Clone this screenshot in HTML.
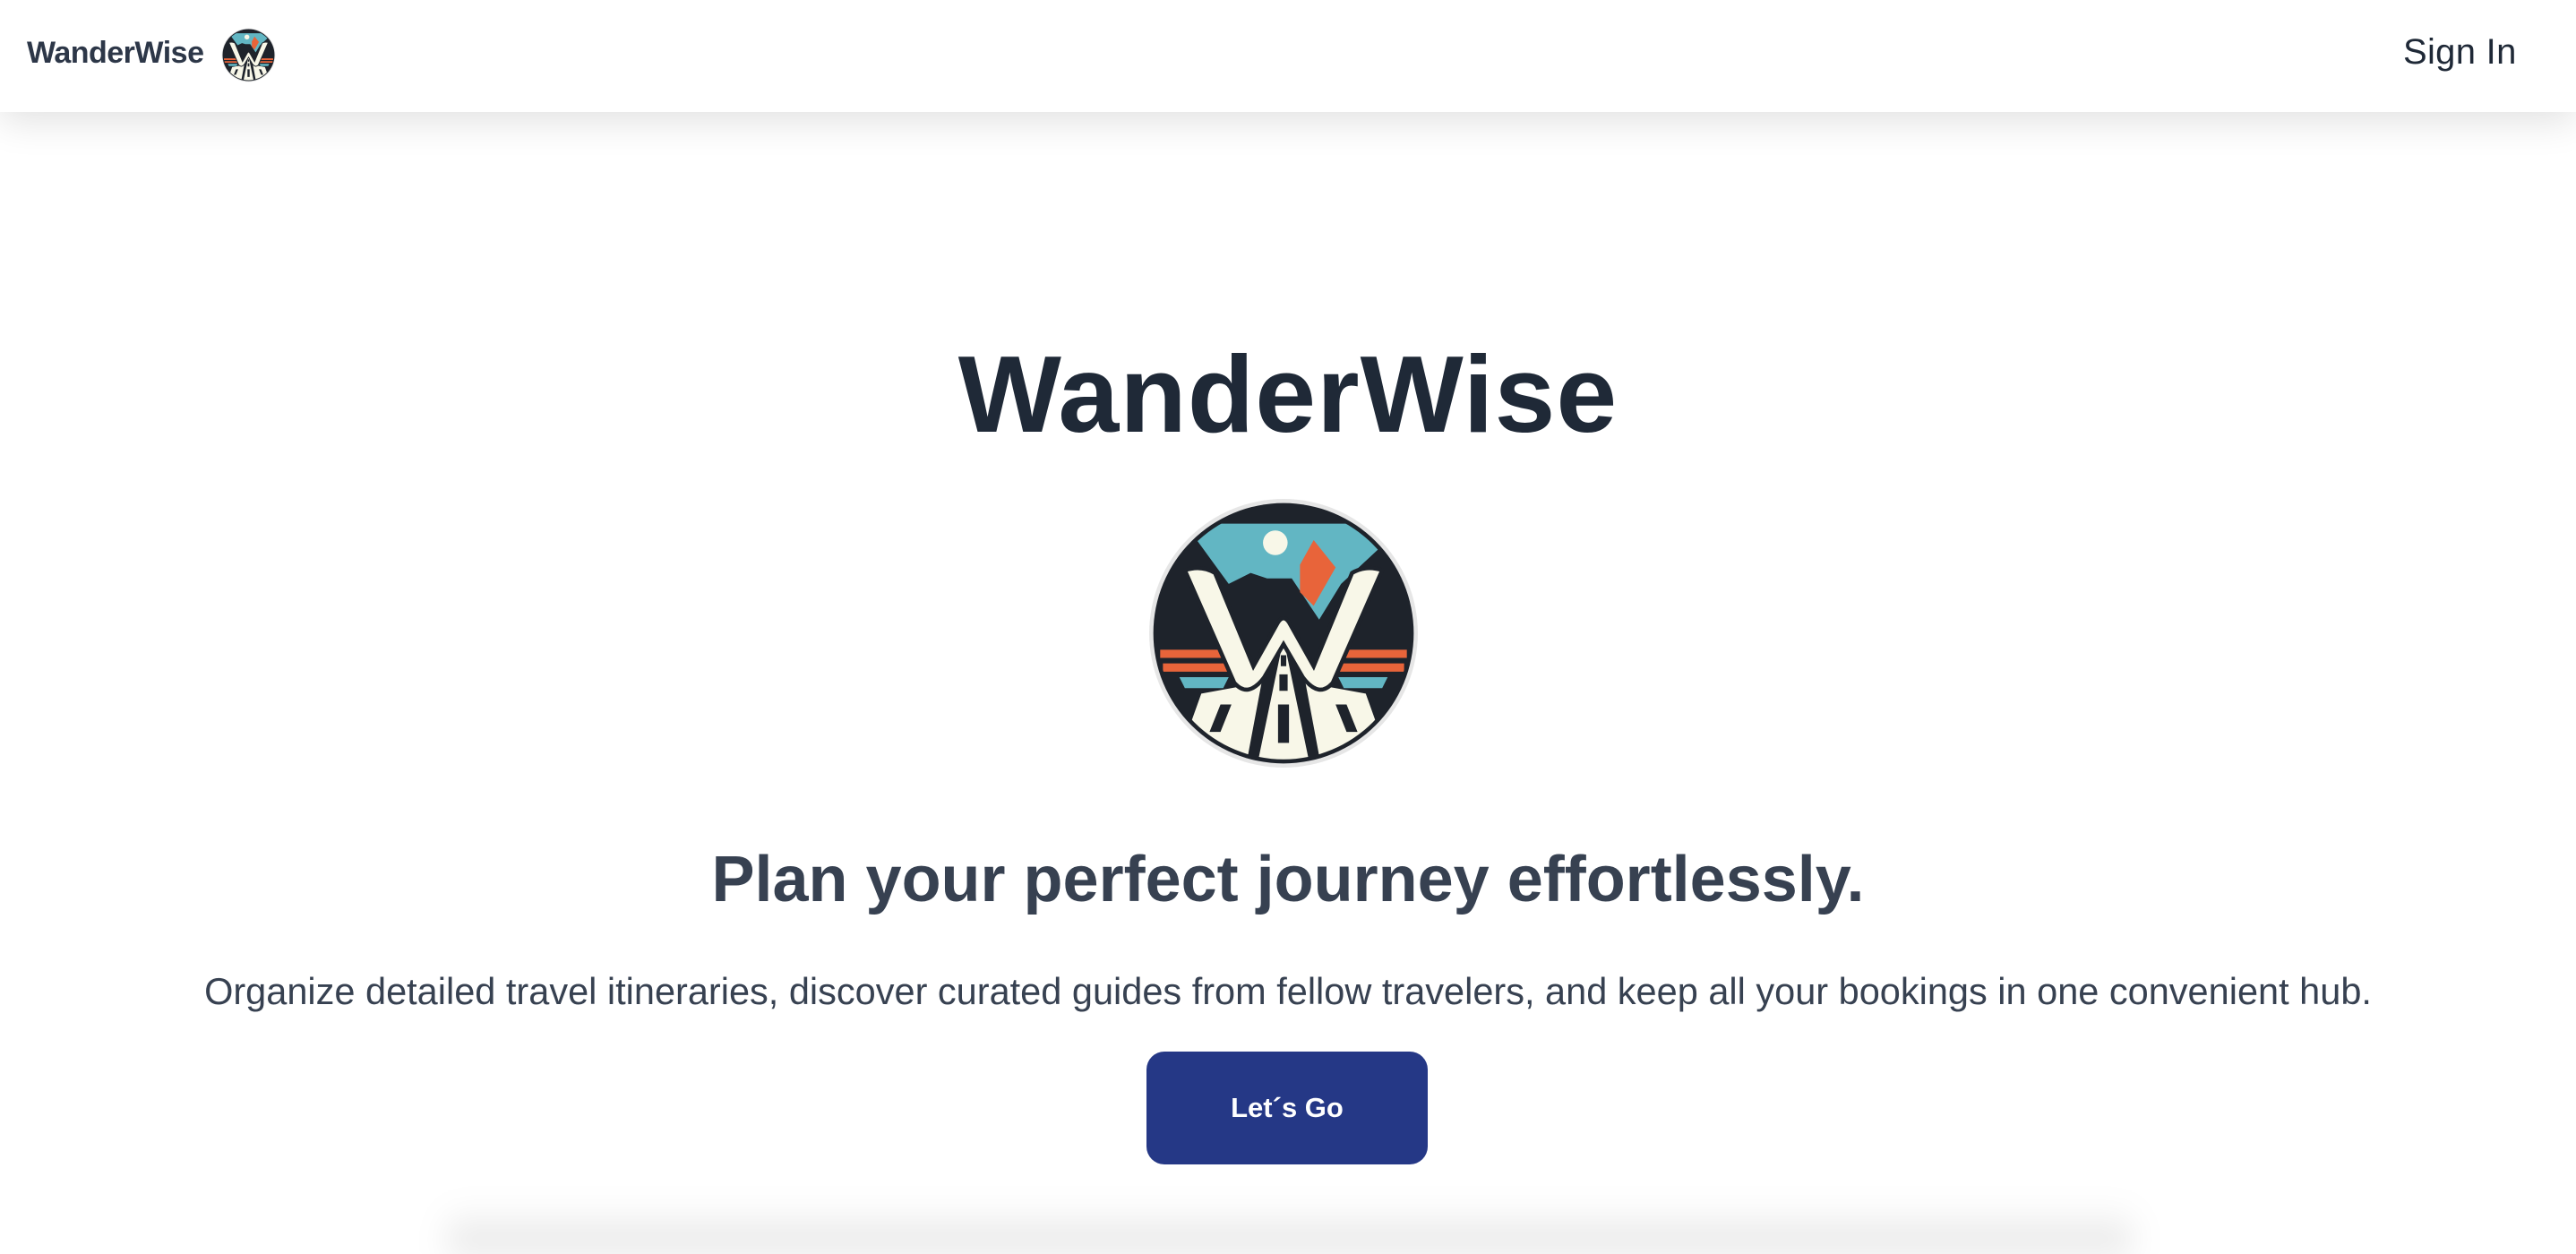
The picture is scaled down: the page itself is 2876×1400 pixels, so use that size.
<!DOCTYPE html>
<html><head><meta charset="utf-8"><style>
html,body{margin:0;padding:0;width:2876px;height:1400px;overflow:hidden;background:#fff;font-family:"Liberation Sans",sans-serif;}
.wrap{position:relative;width:2876px;height:1400px;overflow:hidden}
.hdr{position:absolute;left:0;top:0;width:2876px;height:125px;background:#fff;box-shadow:0 10px 40px rgba(0,0,0,0.12);z-index:2}
.brand{position:absolute;left:30px;top:40px;font-size:34px;font-weight:bold;color:#2d3748;letter-spacing:-0.5px}
.slogo{position:absolute;left:247px;top:31px;width:61px;height:61px}
.sign{position:absolute;left:2683px;top:36px;font-size:40px;color:#1f2937;letter-spacing:0.3px}
.title{position:absolute;left:0;width:2876px;top:370px;text-align:center;font-size:122px;font-weight:bold;color:#1f2937;letter-spacing:1px;line-height:140px}
.blogo{position:absolute;left:1278px;top:554px;width:310px;height:306px}
.sub{position:absolute;left:0;width:2876px;top:940px;text-align:center;font-size:72px;font-weight:bold;color:#374151;line-height:84px}
.para{position:absolute;left:0;width:2876px;top:1083px;text-align:center;font-size:41.5px;color:#374151;line-height:48px}
.btn{position:absolute;left:1280px;top:1174px;width:314px;height:126px;background:#253886;border-radius:20px;color:#fff;font-weight:bold;font-size:31px;text-align:center;line-height:126px}
.shade{position:absolute;left:500px;top:1345px;width:1880px;height:55px;background:linear-gradient(to bottom,rgba(0,0,0,0),rgba(0,0,0,0.12));filter:blur(18px)}
</style></head><body><div class="wrap">
<div class="hdr">
<div class="brand">WanderWise</div>
<svg class="slogo" viewBox="0 0 100 100"><use href="#lg"/></svg>
<div class="sign">Sign In</div>
</div>
<svg width="0" height="0" style="position:absolute"><defs>
<g id="lg">
<circle cx="50" cy="50" r="49" fill="#e6e6e6"/>
<circle cx="50" cy="50" r="47.5" fill="#1e232b"/>
<clipPath id="cc"><circle cx="50" cy="50" r="46"/></clipPath>
<g clip-path="url(#cc)">
<path d="M14 10 L86 10 L86 18 L71 32 L63 45 L53 30 L44 30 L38 28 L30 32 Z" fill="#62b6c3"/>
<path d="M56 25 L61 16 L69 26 L61 40 L56 35 Z" fill="#e8643a"/>
<circle cx="47" cy="17" r="4.5" fill="#f8f7e8"/>
<path d="M5 56 L26 56 L28 59 L5 59 Z M6 61 L29 61 L30 64 L6 64 Z M95 56 L73 56 L71 59 L95 59 Z M94 61 L70 61 L69 64 L94 64 Z" fill="#e8643a"/>
<path d="M12 66 L30 66 L28 70 L14 70 Z M88 66 L70 66 L72 70 L86 70 Z" fill="#62b6c3"/>
<path d="M50 52 L40 100 L60 100 Z M20 72 L42 68 L36 100 L10 100 Z M80 72 L58 68 L64 100 L90 100 Z" fill="#f8f7e8"/>
<path d="M49 58 h2 v4 h-2 Z M48.5 65 h3 v6 h-3 Z M48 76 h4 v14 h-4 Z M27 76 l4 0 l-4 10 l-4 0 Z M73 76 l-4 0 l4 10 l4 0 Z" fill="#1e232b"/>
<path d="M14 27 Q20 25 25 28 L39 62 L48 46 Q50 43 52 46 L61 62 L75 28 Q80 25 86 27 L68 68 Q63 74 57 66 L50 54 L43 66 Q37 74 32 68 Z" fill="#f8f7e8" stroke="#1e232b" stroke-width="1.5"/>
</g>
</g></defs></svg>
<div class="title">WanderWise</div>
<svg class="blogo" viewBox="0 0 100 100"><use href="#lg"/></svg>
<div class="sub">Plan your perfect journey effortlessly.</div>
<div class="para">Organize detailed travel itineraries, discover curated guides from fellow travelers, and keep all your bookings in one convenient hub.</div>
<div class="btn">Let´s Go</div>
<div class="shade"></div>
</div></body></html>
